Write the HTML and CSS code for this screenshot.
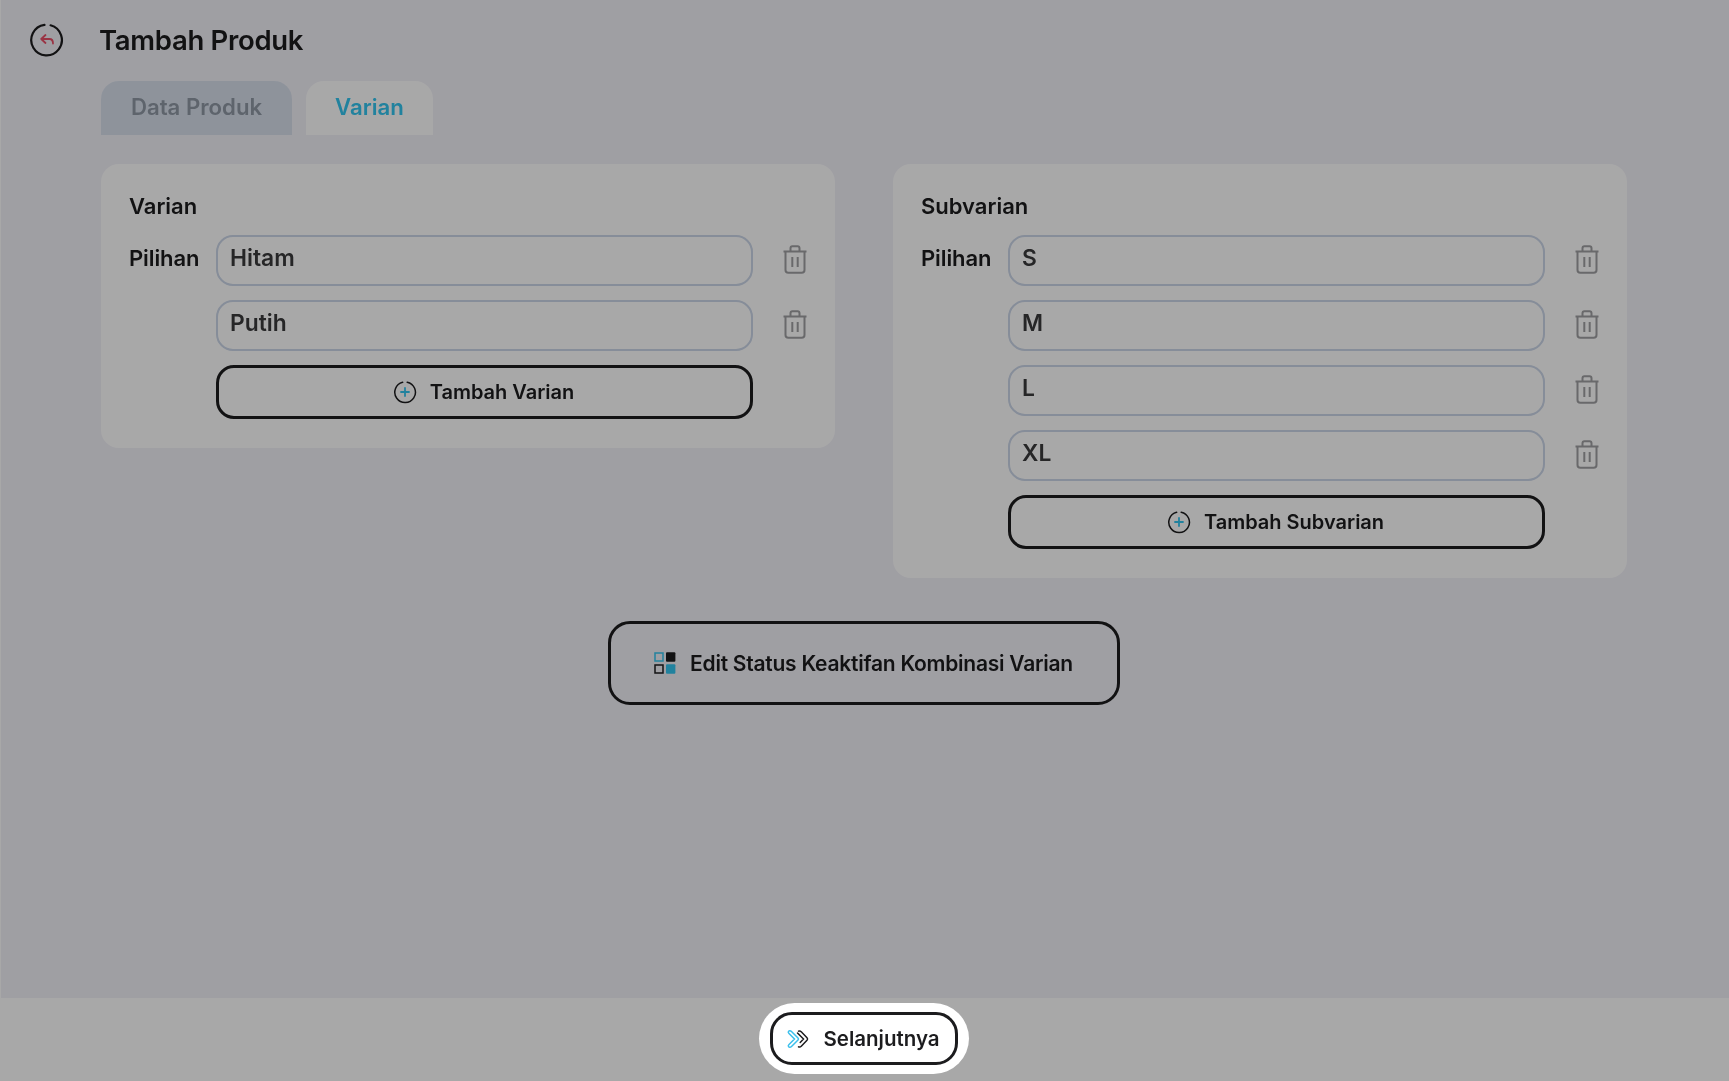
FILE: index.html
```html
<!DOCTYPE html>
<html lang="id">
<head>
<meta charset="utf-8">
<title>Tambah Produk</title>
<link rel="stylesheet" href="styles.css">
</head>
<body>
<svg class="defs" width="0" height="0" aria-hidden="true">
  <symbol id="trash" viewBox="0 0 24 29">
    <path d="M0.500 6.500H23.500M7.500 6V3.200C7.500 2 8.200 1.300 9.400 1.300H14.600C15.800 1.300 16.500 2 16.500 3.200V6" fill="none" stroke="currentColor" stroke-width="2"/>
    <path d="M2.500 7V25C2.500 26.800 3.500 27.800 5.300 27.800H18.700C20.500 27.800 21.500 26.800 21.500 25V7" fill="none" stroke="currentColor" stroke-width="2"/>
    <path d="M9.300 12V22M14.700 12V22" fill="none" stroke="currentColor" stroke-width="2"/>
  </symbol>
  <symbol id="plus" viewBox="0 0 24 24">
    <path d="M14.200 2.200A10.300 10.300 0 1 1 9.600 2.300" fill="none" stroke="#1c1c1e" stroke-width="1.500" stroke-linecap="round"/>
    <path d="M12 8V16M8 12H16" fill="none" stroke="#33c5f0" stroke-width="1.800" stroke-linecap="round"/>
  </symbol>
</svg>

<div class="page">
  <header class="topbar">
    <svg class="back-icon" viewBox="0 0 34 34" aria-hidden="true">
      <path d="M20.600 2.300A15.300 15.300 0 1 1 14.500 1.900" fill="none" stroke="#1c1c1e" stroke-width="2.200" stroke-linecap="round"/>
      <path d="M15.500 12L11.200 16L15.500 20M11.500 16H19.500C21.800 16 23 17.500 23 20.500" fill="none" stroke="#ea5068" stroke-width="1.800" stroke-linecap="round" stroke-linejoin="round"/>
    </svg>
    <h1 class="title">Tambah Produk</h1>
  </header>

  <main class="content">
    <nav class="tabs">
      <div class="tab">Data Produk</div>
      <div class="tab tab-active">Varian</div>
    </nav>

    <section class="cards">
      <div class="card">
        <h2 class="card-title">Varian</h2>
        <div class="rows">
          <div class="row"><span class="label">Pilihan</span><div class="field">Hitam</div><svg class="trash"><use href="#trash"/></svg></div>
          <div class="row"><span class="label"></span><div class="field">Putih</div><svg class="trash"><use href="#trash"/></svg></div>
          <div class="row"><span class="label"></span><button class="add-btn"><svg class="plus"><use href="#plus"/></svg>Tambah Varian</button><span class="trash"></span></div>
        </div>
      </div>
      <div class="card">
        <h2 class="card-title">Subvarian</h2>
        <div class="rows">
          <div class="row"><span class="label">Pilihan</span><div class="field">S</div><svg class="trash"><use href="#trash"/></svg></div>
          <div class="row"><span class="label"></span><div class="field">M</div><svg class="trash"><use href="#trash"/></svg></div>
          <div class="row"><span class="label"></span><div class="field">L</div><svg class="trash"><use href="#trash"/></svg></div>
          <div class="row"><span class="label"></span><div class="field">XL</div><svg class="trash"><use href="#trash"/></svg></div>
          <div class="row"><span class="label"></span><button class="add-btn"><svg class="plus"><use href="#plus"/></svg>Tambah Subvarian</button><span class="trash"></span></div>
        </div>
      </div>
    </section>

    <div class="edit-wrap">
      <button class="edit-btn">
        <svg class="grid-icon" viewBox="0 0 22 22" aria-hidden="true">
          <rect x="1" y="1" width="8" height="8" fill="none" stroke="#33c5f0" stroke-width="1.500"/>
          <rect x="12" y="0.300" width="9.400" height="9.400" rx="1" fill="#1c1c1e"/>
          <rect x="1" y="13" width="8" height="8" fill="none" stroke="#1c1c1e" stroke-width="1.500"/>
          <rect x="12" y="12.300" width="9.400" height="9.400" rx="1" fill="#33c5f0"/>
        </svg>
        Edit Status Keaktifan Kombinasi Varian
      </button>
    </div>
  </main>

  <footer class="footer">
    <div class="spotlight">
      <button class="next-btn">
        <svg class="next-icon" viewBox="0 0 24 20" aria-hidden="true">
          <path d="M2.500 2.500C3 1.500 4.500 1.500 5.500 2.500L12 9C12.600 9.600 12.600 10.400 12 11L5.500 17.500C4.500 18.500 3 18.500 2.500 17.500C2 16.800 2.300 16.200 3 15.500L8.500 10L3 4.500C2.300 3.800 2 3.200 2.500 2.500Z" fill="none" stroke="#3cc0ec" stroke-width="1.500"/>
          <path d="M12.500 2.200C13.500 1.600 14.500 2 15.500 3L21 8.700C21.700 9.500 21.700 10.500 21 11.300L15.500 17C14.500 18 13.500 18.400 12.500 17.800M11.500 4L17.500 10L14.200 13.500" fill="none" stroke="#1c1c1e" stroke-width="1.500" stroke-linecap="round"/>
        </svg>
        Selanjutnya
      </button>
    </div>
  </footer>
</div>
</body>
</html>
```

FILE: styles.css
```css
* { box-sizing: border-box; }

html, body {
  margin: 0;
  height: 100%;
  overflow: hidden;
}

body {
  font-family: Inter, "Noto Sans", sans-serif;
  color: #1c1c1e;
  background: #f2f1f8;
}

.defs { position: absolute; }

.page {
  height: 1081px;
  display: flex;
  flex-direction: column;
  border-left: 1px solid #ffffff;
  filter: blur(0.45px);
}

.topbar {
  display: flex;
  align-items: center;
  height: 81px;
  padding: 0 0 1px 29px;
  gap: 35px;
}

.back-icon { width: 34px; height: 34px; }

.title {
  margin: 0;
  font-size: 27.500px;
  font-weight: 600;
  letter-spacing: -0.3px;
}

.content {
  flex: 1;
  padding: 0 102px 0 100px;
}

.tabs {
  display: flex;
  gap: 14px;
}

.tab {
  height: 54px;
  width: 191px;
  padding-bottom: 4px;
  border-radius: 18px 18px 0 0;
  background: #d8e0ec;
  color: #8f98a5;
  font-size: 22.200px;
  font-weight: 600;
  display: flex;
  align-items: center;
  justify-content: center;
}

.tab-active {
  width: 127px;
  background: #ffffff;
  color: #33c5f0;
}

.cards {
  display: grid;
  grid-template-columns: 734px 734px;
  gap: 58px;
  align-items: start;
  margin-top: 29px;
}

.card {
  background: #ffffff;
  border-radius: 18px;
  padding: 28px 28px 29px;
}

.card-title {
  margin: 0 0 14px;
  height: 29px;
  font-size: 22px;
  line-height: 29px;
  font-weight: 600;
}

.rows {
  display: flex;
  flex-direction: column;
  gap: 14px;
}

.row {
  display: flex;
  align-items: center;
}

.label {
  width: 87px;
  flex: none;
  font-size: 22px;
  font-weight: 600;
  letter-spacing: -0.1px;
  padding-bottom: 6px;
}

.field {
  width: 537px;
  height: 51px;
  flex: none;
  border: 2px solid #cbd6e8;
  border-radius: 17px;
  padding: 0 12px 7px;
  font-size: 22.800px;
  font-weight: 600;
  color: #3a3a3c;
  display: flex;
  align-items: center;
}

.trash {
  width: 24px;
  height: 29px;
  flex: none;
  margin: 0 0 3px 30px;
  color: #a0a0a3;
}

.add-btn,
.edit-btn,
.next-btn {
  display: flex;
  align-items: center;
  justify-content: center;
  font-family: inherit;
  font-weight: 600;
  color: #1c1c1e;
  background: transparent;
  cursor: pointer;
}

.add-btn {
  width: 537px;
  height: 54px;
  flex: none;
  border: 3px solid #1c1c1e;
  border-radius: 18px;
  padding: 0 2px 0 0;
  font-size: 20px;
  gap: 13px;
}

.plus { width: 24px; height: 24px; }

.edit-wrap {
  display: flex;
  justify-content: center;
  margin-top: 43px;
  padding-right: 1px;
}

.edit-btn {
  width: 512px;
  height: 84px;
  border: 3px solid #1c1c1e;
  border-radius: 22px;
  font-size: 21px;
  letter-spacing: -0.25px;
  gap: 14px;
}

.grid-icon { width: 22px; height: 22px; }

.footer {
  height: 83px;
  flex: none;
  background: #ffffff;
  display: flex;
  align-items: center;
  justify-content: center;
  padding: 0 2px 2px 0;
}

.spotlight {
  background: #ffffff;
  border-radius: 36px;
  padding: 9px 11px;
  box-shadow: 0 0 0 2000px rgba(0, 0, 0, 0.34);
}

.next-btn {
  width: 188px;
  height: 53px;
  border: 3px solid #1c1c1e;
  border-radius: 22px;
  padding: 0 2px 0 0;
  font-size: 20.500px;
  gap: 13px;
}

.next-icon { width: 24px; height: 20px; }
```
